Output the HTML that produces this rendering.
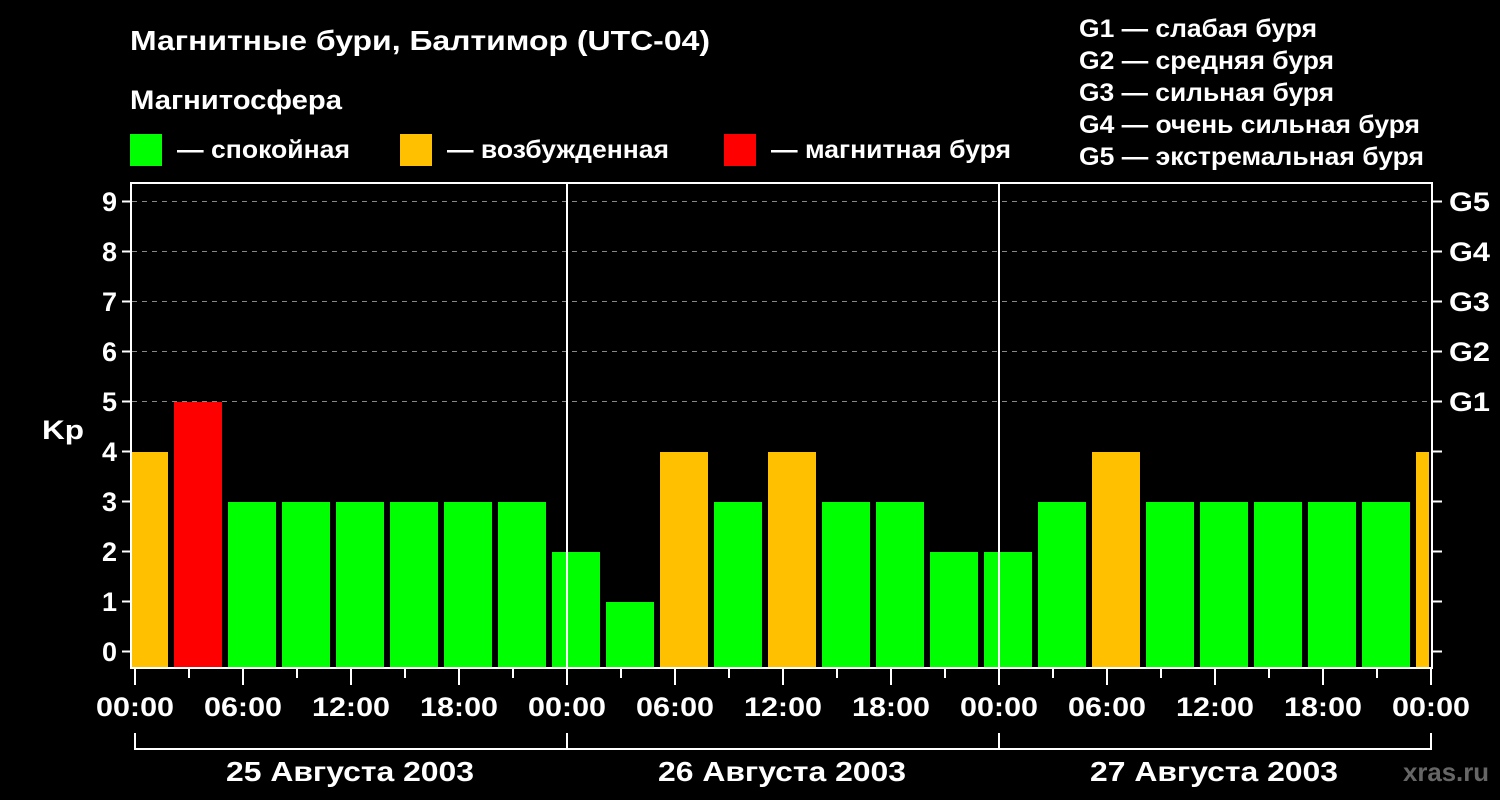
<!DOCTYPE html><html><head><meta charset="utf-8"><style>body{margin:0;background:#000}svg{display:block}text{font-family:"Liberation Sans",sans-serif;font-weight:bold;fill:#fff}</style></head><body>
<svg width="1500" height="800" viewBox="0 0 1500 800">
<rect width="1500" height="800" fill="#000"/>
<text x="130" y="50" font-size="28" textLength="580" lengthAdjust="spacingAndGlyphs">Магнитные бури, Балтимор (UTC-04)</text>
<text x="130" y="109" font-size="27" textLength="212" lengthAdjust="spacingAndGlyphs">Магнитосфера</text>
<rect x="130" y="134" width="32" height="32" fill="#00ff00"/><text x="177" y="158" font-size="25" textLength="173" lengthAdjust="spacingAndGlyphs">— спокойная</text>
<rect x="400" y="134" width="32" height="32" fill="#ffc000"/><text x="447" y="158" font-size="25" textLength="222" lengthAdjust="spacingAndGlyphs">— возбужденная</text>
<rect x="724" y="134" width="32" height="32" fill="#ff0000"/><text x="771" y="158" font-size="25" textLength="240" lengthAdjust="spacingAndGlyphs">— магнитная буря</text>
<g font-size="25"><text x="1079" y="37" textLength="238" lengthAdjust="spacingAndGlyphs">G1 — слабая буря</text><text x="1079" y="69" textLength="255" lengthAdjust="spacingAndGlyphs">G2 — средняя буря</text><text x="1079" y="101" textLength="255" lengthAdjust="spacingAndGlyphs">G3 — сильная буря</text><text x="1079" y="133" textLength="341" lengthAdjust="spacingAndGlyphs">G4 — очень сильная буря</text><text x="1079" y="165" textLength="345" lengthAdjust="spacingAndGlyphs">G5 — экстремальная буря</text></g>
<g stroke="#888" stroke-width="1" stroke-dasharray="5,5">
<line x1="132" y1="201.5" x2="1432" y2="201.5"/><line x1="132" y1="251.5" x2="1432" y2="251.5"/><line x1="132" y1="301.5" x2="1432" y2="301.5"/><line x1="132" y1="351.5" x2="1432" y2="351.5"/><line x1="132" y1="401.5" x2="1432" y2="401.5"/></g>
<g id="bars"></g>
<g stroke="#fff" stroke-width="2" fill="none">
<rect x="131" y="183" width="1301" height="485"/>
<line x1="567" y1="183" x2="567" y2="668"/><line x1="999" y1="183" x2="999" y2="668"/>
<path d="M122 201.5H131M122 251.5H131M122 301.5H131M122 351.5H131M122 401.5H131M122 451.5H131M122 501.5H131M122 551.5H131M122 601.5H131M122 651.5H131"/>
<path d="M1432 201.5H1442M1432 251.5H1442M1432 301.5H1442M1432 351.5H1442M1432 401.5H1442M1432 451.5H1442M1432 501.5H1442M1432 551.5H1442M1432 601.5H1442M1432 651.5H1442"/>
<path id="xt"/>
<path d="M135 733V749H1431V733M567 733V749M999 733V749"/>
</g>
<g font-size="27" text-anchor="end"><text x="117" y="211">9</text><text x="117" y="261">8</text><text x="117" y="311">7</text><text x="117" y="361">6</text><text x="117" y="411">5</text><text x="117" y="461">4</text><text x="117" y="511">3</text><text x="117" y="561">2</text><text x="117" y="611">1</text><text x="117" y="661">0</text></g>
<text x="42" y="439" font-size="27" textLength="42" lengthAdjust="spacingAndGlyphs">Kp</text>
<g font-size="27"><text x="1449" y="211" textLength="41" lengthAdjust="spacingAndGlyphs">G5</text><text x="1449" y="261" textLength="41" lengthAdjust="spacingAndGlyphs">G4</text><text x="1449" y="311" textLength="41" lengthAdjust="spacingAndGlyphs">G3</text><text x="1449" y="361" textLength="41" lengthAdjust="spacingAndGlyphs">G2</text><text x="1449" y="411" textLength="41" lengthAdjust="spacingAndGlyphs">G1</text></g>
<g font-size="27" id="tl"></g>
<g font-size="28">
<text x="226" y="781" textLength="248" lengthAdjust="spacingAndGlyphs">25 Августа 2003</text><text x="658" y="781" textLength="248" lengthAdjust="spacingAndGlyphs">26 Августа 2003</text><text x="1090" y="781" textLength="248" lengthAdjust="spacingAndGlyphs">27 Августа 2003</text></g>
<text x="1403" y="781" font-size="26" style="fill:#666" textLength="86" lengthAdjust="spacingAndGlyphs">xras.ru</text>
</svg>
<script>
var v=[4,5,3,3,3,3,3,3,2,1,4,3,4,3,3,2,2,3,4,3,3,3,3,3,4];
var g=document.getElementById('bars'),s='';
v.forEach(function(k,i){var x1=Math.max(120+54*i,132),x2=Math.min(168+54*i,1429);var y=652-50*k;var c=k>=5?'#ff0000':k==4?'#ffc000':'#00ff00';
s+='<rect x="'+x1+'" y="'+y+'" width="'+(x2-x1)+'" height="'+(668-y)+'" fill="'+c+'"/>';});
g.innerHTML=s;
var d='';for(var i=0;i<=24;i++){var x=135+54*i;d+='M'+x+' 668V'+(i%2?678:685);}
document.getElementById('xt').setAttribute('d',d);
var L=['00:00','06:00','12:00','18:00'],t='';
for(var j=0;j<=12;j++){t+='<text x="'+(96+108*j)+'" y="716" textLength="78" lengthAdjust="spacingAndGlyphs">'+L[j%4]+'</text>';}
document.getElementById('tl').innerHTML=t;
</script>
</body></html>
